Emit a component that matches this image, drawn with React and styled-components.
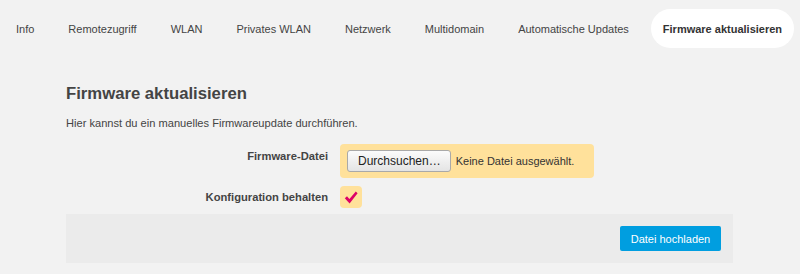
import React from 'react';
import styled, { createGlobalStyle } from 'styled-components';

const GlobalStyle = createGlobalStyle`
    html, body {
        margin: 0;
        padding: 0;
        background: #f2f2f2;
        font-family: "Liberation Sans", Arial, sans-serif;
        color: #444;
    }
`;

const Nav = styled.nav`
    display: flex;
    align-items: center;
    gap: 10px;
    padding: 9px 0 0 4px;
`;

const Tab = styled.a`
    display: flex;
    align-items: center;
    height: 39px;
    padding: 0 12px;
    border-radius: 20px;
    font-size: 11px;
    white-space: nowrap;
    text-decoration: none;
    color: ${(p) => (p.$active ? '#333' : '#444')};
    font-weight: ${(p) => (p.$active ? 'bold' : 'normal')};
    background: ${(p) => (p.$active ? '#fff' : 'transparent')};
`;

const Content = styled.div`
    margin: 0 0 0 66px;
    width: 667px;
`;

const Title = styled.h2`
    margin: 0;
    padding-top: 36px;
    font-size: 16.7px;
    line-height: 20px;
    font-weight: bold;
    color: #444;
`;

const Intro = styled.p`
    margin: 0;
    padding-top: 12px;
    font-size: 11.1px;
    line-height: 14px;
`;

const Form = styled.div`
    display: grid;
    grid-template-columns: 262px auto;
    column-gap: 12px;
    row-gap: 8px;
    align-items: start;
    padding-top: 14px;
    padding-bottom: 6px;
`;

const Label = styled.label`
    text-align: right;
    font-size: 11.2px;
    font-weight: bold;
    color: #444;
    line-height: 14px;
    padding-top: ${(p) => p.$top}px;
`;

const Field = styled.div`
    justify-self: start;
    display: flex;
    align-items: center;
    gap: 5px;
    padding: 6px 20px 6px 7px;
    background: #ffe19b;
    border-radius: 4px;
    font-size: 11px;
    color: #333;
`;

const FileButton = styled.button`
    font-family: inherit;
    font-size: 12px;
    color: #222;
    height: 22px;
    padding: 0 9px 0 10px;
    border: 1px solid #a9a9a9;
    border-radius: 3px;
    background: linear-gradient(#fbfbfb, #e4e4e4);
`;

const Check = styled.div`
    width: 22px;
    height: 22px;
    border-radius: 4px;
    background: #ffe19b;
    display: flex;
    align-items: center;
    justify-content: center;
`;

const Footer = styled.div`
    display: flex;
    justify-content: flex-end;
    align-items: center;
    height: 49px;
    padding-right: 12px;
    background: #ebebeb;
`;

const Submit = styled.button`
    font-family: inherit;
    font-size: 11px;
    color: #fff;
    background: #009ee0;
    border: none;
    border-radius: 2px;
    height: 25px;
    width: 101px;
    padding: 0;
`;

const tabs = [
    'Info',
    'Remotezugriff',
    'WLAN',
    'Privates WLAN',
    'Netzwerk',
    'Multidomain',
    'Automatische Updates',
    'Firmware aktualisieren',
];

export default function App() {
    return (
        <>
            <GlobalStyle />
            <Nav>
                {tabs.map((t, i) => (
                    <Tab key={t} $active={i === tabs.length - 1}>
                        {t}
                    </Tab>
                ))}
            </Nav>
            <Content>
                <Title>Firmware aktualisieren</Title>
                <Intro>Hier kannst du ein manuelles Firmwareupdate durchführen.</Intro>
                <Form>
                    <Label $top={5}>Firmware-Datei</Label>
                    <Field>
                        <FileButton>Durchsuchen…</FileButton>
                        Keine Datei ausgewählt.
                    </Field>
                    <Label $top={4}>Konfiguration behalten</Label>
                    <Check>
                        <svg width="14" height="13" viewBox="0 0 14 13">
                            <path d="M0.8 7.2 L3 5.2 L5.4 8 L11.8 0.6 L13.6 2.2 L5.6 12.4 Z" fill="#dc0067" />
                        </svg>
                    </Check>
                </Form>
                <Footer>
                    <Submit>Datei hochladen</Submit>
                </Footer>
            </Content>
        </>
    );
}
